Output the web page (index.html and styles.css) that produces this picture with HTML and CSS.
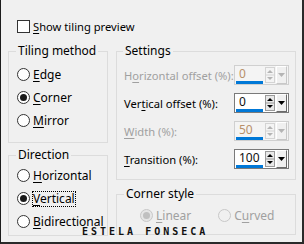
FILE: index.html
```html
<!DOCTYPE html>
<html lang="en">
<head>
<meta charset="UTF-8">
<title>Tiling</title>
<link rel="stylesheet" href="styles.css">
</head>
<body>
<div class="dlg">
  <label class="check"><span class="box"></span><span><u>S</u>how tiling preview</span></label>
  <div class="cols">
    <div class="col">
      <fieldset class="grp tiling">
        <legend>Tiling method</legend>
        <div class="opt"><span class="radio"></span><span><u>E</u>dge</span></div>
        <div class="opt"><span class="radio on"></span><span><u>C</u>orner</span></div>
        <div class="opt"><span class="radio"></span><span><u>M</u>irror</span></div>
      </fieldset>
      <fieldset class="grp direction">
        <legend>Direction</legend>
        <div class="opt"><span class="radio"></span><span><u>H</u>orizontal</span></div>
        <div class="opt"><span class="radio on"></span><span class="focus"><u>V</u>ertical</span></div>
        <div class="opt"><span class="radio"></span><span><u>B</u>idirectional</span></div>
      </fieldset>
    </div>
    <div class="col">
      <fieldset class="grp settings">
        <legend>Settings</legend>
        <div class="field off">
          <span class="lbl">H<u>o</u>rizontal offset (%):</span>
          <div class="spin"><span class="val">0</span>
            <svg class="arrows" width="10" height="16" viewBox="0 0 10 16"><rect x="0.5" y="0.5" width="9" height="15" fill="#f4f4f4" stroke="#d4d4d4"/><line x1="1" y1="8" x2="9" y2="8" stroke="#d4d4d4"/><path d="M5 3 L8 6 L2 6 Z" fill="#b4b4b4"/><path d="M2 10 L8 10 L5 13 Z" fill="#b4b4b4"/></svg>
            <span class="drop"><svg width="7" height="4" viewBox="0 0 7 4"><path d="M0 0 L7 0 L3.5 4 Z" fill="#b4b4b4"/></svg></span>
          </div>
        </div>
        <div class="field">
          <span class="lbl">Ver<u>t</u>ical offset (%):</span>
          <div class="spin"><span class="val">0</span>
            <svg class="arrows" width="10" height="16" viewBox="0 0 10 16"><rect x="0.5" y="0.5" width="9" height="15" fill="#e8e8e8" stroke="#9a9a9a"/><line x1="1" y1="8" x2="9" y2="8" stroke="#9a9a9a"/><path d="M5 3 L8 6 L2 6 Z" fill="#000"/><path d="M2 10 L8 10 L5 13 Z" fill="#000"/></svg>
            <span class="drop"><svg width="7" height="4" viewBox="0 0 7 4"><path d="M0 0 L7 0 L3.5 4 Z" fill="#000"/></svg></span>
          </div>
        </div>
        <div class="field off">
          <span class="lbl"><u>W</u>idth (%):</span>
          <div class="spin"><span class="val">50</span>
            <svg class="arrows" width="10" height="16" viewBox="0 0 10 16"><rect x="0.5" y="0.5" width="9" height="15" fill="#f4f4f4" stroke="#d4d4d4"/><line x1="1" y1="8" x2="9" y2="8" stroke="#d4d4d4"/><path d="M5 3 L8 6 L2 6 Z" fill="#b4b4b4"/><path d="M2 10 L8 10 L5 13 Z" fill="#b4b4b4"/></svg>
            <span class="drop"><svg width="7" height="4" viewBox="0 0 7 4"><path d="M0 0 L7 0 L3.5 4 Z" fill="#b4b4b4"/></svg></span>
          </div>
        </div>
        <div class="field">
          <span class="lbl"><u>T</u>ransition (%):</span>
          <div class="spin"><span class="val">100</span>
            <svg class="arrows" width="10" height="16" viewBox="0 0 10 16"><rect x="0.5" y="0.5" width="9" height="15" fill="#e8e8e8" stroke="#9a9a9a"/><line x1="1" y1="8" x2="9" y2="8" stroke="#9a9a9a"/><path d="M5 3 L8 6 L2 6 Z" fill="#000"/><path d="M2 10 L8 10 L5 13 Z" fill="#000"/></svg>
            <span class="drop"><svg width="7" height="4" viewBox="0 0 7 4"><path d="M0 0 L7 0 L3.5 4 Z" fill="#000"/></svg></span>
          </div>
        </div>
      </fieldset>
      <fieldset class="grp corner">
        <legend>Corner style</legend>
        <div class="row">
          <div class="opt off"><span class="radio on"></span><span><u>L</u>inear</span></div>
          <div class="opt off"><span class="radio"></span><span>C<u>u</u>rved</span></div>
        </div>
      </fieldset>
    </div>
  </div>
  <div class="mark">ESTELA FONSECA</div>
</div>
</body>
</html>
```

FILE: styles.css
```css
*{margin:0;padding:0;box-sizing:border-box}
body{background:#f0f0f0;font-family:'Noto Sans',sans-serif;font-size:11.2px;color:#000}
u{text-decoration:underline;text-underline-offset:2px}
.dlg{position:relative;width:304px;height:244px;background:#f0f0f0;border-left:1px solid #1c1c1c;border-right:2px solid #2a2a2a;border-bottom:2px solid #2a2a2a;padding:20px 0 0 7px}
.check{display:flex;align-items:center;gap:3px;height:13px;margin-left:9px;line-height:13px}
.check .box{width:13px;height:13px;border:1px solid #333;background:#fff}
.cols{display:grid;grid-template-columns:100px 180px;column-gap:8px;margin-top:11px}
.col{display:flex;flex-direction:column}
.grp{border:1px solid #dcdcdc;padding:0 0 0 8px;min-width:0}
.grp legend{padding:0 2px;margin-left:-1px;line-height:14px;font-size:12px}
.tiling{height:99px;padding-top:5px}
.direction{height:88px;margin-top:5px;padding-top:2px}
.opt{display:flex;align-items:center;gap:3px;height:23px;font-size:12px}
.radio{width:13px;height:13px;border:1px solid #333;border-radius:50%;background:#fff;display:flex;align-items:center;justify-content:center}
.radio.on::after{content:"";width:7px;height:7px;border-radius:50%;background:#1a1a1a}
.focus{outline:1px dotted #000;outline-offset:0;line-height:14px}
.settings{height:136px;padding:3px 6px 0 7px}
.field{display:flex;align-items:center;justify-content:space-between;height:28px}
.field.off .lbl{color:#a0a0a0}
.spin{display:flex;align-items:center;width:55px;height:20px;border:1px solid #7a7a7a;background:#fff;padding-right:1px}
.field.off .spin{border-color:#d0d0d0;background:#f4f4f4}
.val{flex:1;align-self:stretch;margin:0 2px 0 1px;padding-left:3px;line-height:16px;border-bottom:3px solid #0078d7;color:#111;font-size:12px}
.field.off .val{color:#b8906a}
.arrows{display:block}
.drop{display:flex;align-items:center;justify-content:center;width:11px;height:18px;margin-left:1px;background:#f0f0f0;border-top:1px solid #fff;border-left:1px solid #fff;border-right:1px solid #6a6a6a;border-bottom:1px solid #6a6a6a}
.field.off .drop{border-right-color:#c8c8c8;border-bottom-color:#c8c8c8}
.corner{height:48px;margin-top:7px;padding:3px 0 0 8px}
.corner .row{display:flex;gap:27px;padding-left:15px}
.opt.off{color:#a0a0a0}
.opt.off .radio{border-color:#c8c8c8;background:#f0f0f0}
.opt.off .radio.on{background:#e6e6e6}
.opt.off .radio.on::after{background:#c0c0c0}
.mark{position:absolute;left:81px;top:227px;font-family:'DejaVu Sans Mono',monospace;font-weight:bold;font-size:10px;letter-spacing:3px;color:#111;line-height:10px}
```
